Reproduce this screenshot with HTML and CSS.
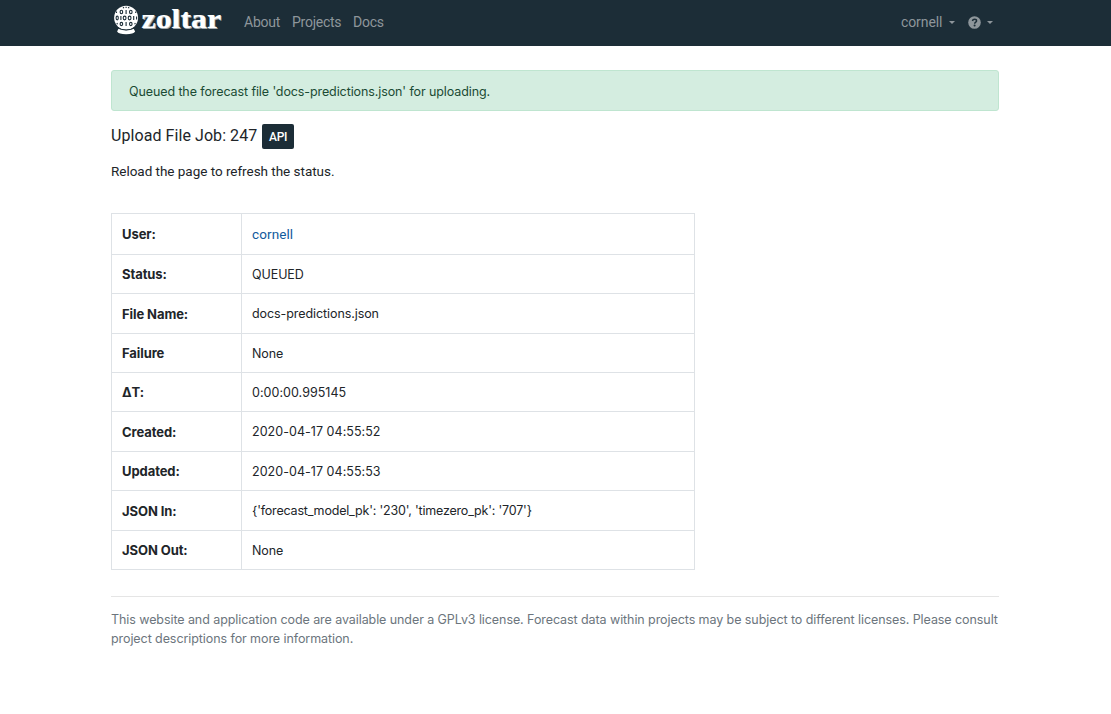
FILE: index.html
```html
<!DOCTYPE html>
<html lang="en">
<head>
<meta charset="utf-8">
<title>Upload File Job: 247</title>
<link rel="stylesheet" href="styles.css">
</head>
<body>
<nav class="navbar">
  <div class="container nav-inner">
    <a class="brand">
      <svg width="112" height="36" viewBox="0 0 112 36" role="img" aria-label="zoltar">
        <g transform="translate(.6 0)">
        <circle cx="14.5" cy="17.8" r="12" fill="#fff"/>
        <path d="M7 28.5Q14.5 32 22 28.5L23.5 31.5Q22 34.2 14.5 34.2Q7 34.2 5.5 31.5Z" fill="#fff"/>
        <g fill="none" stroke="#1c2d37" stroke-width="1.1">
          <ellipse cx="9.8" cy="12" rx="1.3" ry="1.7"/><path d="M14.5 10V14"/><ellipse cx="19.2" cy="12" rx="1.3" ry="1.7"/>
          <path d="M4.9 11.5V13M24.1 11.5V13"/>
          <ellipse cx="5.6" cy="18" rx="1.1" ry="1.9"/><path d="M9.3 15.9V20.1"/><ellipse cx="13" cy="18" rx="1.4" ry="1.9"/><ellipse cx="18" cy="18" rx="1.4" ry="1.9"/><path d="M22.1 15.9V20.1M25 16.5V19.5"/>
          <ellipse cx="9.8" cy="24" rx="1.3" ry="1.6"/><path d="M14.5 22V26"/><ellipse cx="19.2" cy="24" rx="1.3" ry="1.6"/>
          <path d="M11.5 8.2L12.3 7M14.5 8V6.8M17.5 8.2L16.7 7M5.2 23L6 24.2M23.8 23L23 24.2"/>
          <path d="M5 27.5Q14.5 32.5 24 27.5" stroke-width="1"/>
        </g>
        </g>
        <text class="wordmark-shade" x="31.4" y="29.1" textLength="79.5" lengthAdjust="spacingAndGlyphs">zoltar</text>
        <text class="wordmark" x="30.6" y="28.3" textLength="79.5" lengthAdjust="spacingAndGlyphs">zoltar</text>
      </svg>
    </a>
    <a class="link about">About</a>
    <a class="link projects">Projects</a>
    <a class="link docs">Docs</a>
    <a class="link user">cornell</a><span class="caret"></span>
    <svg class="help" width="13" height="13" viewBox="0 0 512 512" aria-label="Help"><circle cx="256" cy="256" r="248" fill="currentColor"/><path d="M174 197C184 145 217 126 263 126C304 126 337 151 337 193C337 249 263 239 263 304" fill="none" stroke="#1c2d37" stroke-width="58"/><circle cx="260" cy="370" r="40" fill="#1c2d37"/></svg><span class="caret caret-help"></span>
  </div>
</nav>
<main class="container">
  <div class="alert"><span>Queued the forecast file 'docs-predictions.json' for uploading.</span></div>
  <div class="heading"><h1>Upload File Job: 247</h1><a class="api">API</a></div>
  <p class="reload">Reload the page to refresh the status.</p>
  <dl class="details">
    <dt>User:</dt><dd><a class="user-link">cornell</a></dd>
    <dt>Status:</dt><dd>QUEUED</dd>
    <dt>File Name:</dt><dd>docs-predictions.json</dd>
    <dt>Failure</dt><dd>None</dd>
    <dt>ΔT:</dt><dd class="numeric">0:00:00.995145</dd>
    <dt>Created:</dt><dd class="numeric">2020-04-17 04:55:52</dd>
    <dt>Updated:</dt><dd class="numeric">2020-04-17 04:55:53</dd>
    <dt>JSON In:</dt><dd class="json">{'forecast_model_pk': '230', 'timezero_pk': '707'}</dd>
    <dt>JSON Out:</dt><dd>None</dd>
  </dl>
  <footer>This website and application code are available under a GPLv3 license. Forecast data within projects may be subject to different licenses. Please consult<br>project descriptions for more information.</footer>
</main>
</body>
</html>
```
FILE: styles.css
```css
* { box-sizing: border-box; }
body { margin: 0; background: #fff; color: #212529; font: 12.5px/20px Inter, "Liberation Sans", sans-serif; }
.container { width: 888px; margin-left: 111px; }
.navbar { height: 46px; background: #1c2d37; }
.nav-inner { display: flex; align-items: center; height: 45px; color: #8e969b; }
.brand { width: 133px; height: 45px; flex: none; }
.brand svg { display: block; }
.wordmark, .wordmark-shade { font: bold 27px "Liberation Serif", serif; fill: #fff; stroke: #fff; stroke-width: .2; }
.wordmark-shade { fill: #a4abaf; stroke: #a4abaf; }
.link { padding-bottom: 1px; font: 14px/20px Roboto, sans-serif; letter-spacing: -.25px; white-space: nowrap; flex: none; }
.about { width: 48px; }
.projects { width: 61px; }
.user { width: 48px; margin-left: auto; letter-spacing: -.1px; }
.caret { width: 0; height: 0; flex: none; border: 3px solid transparent; border-top-color: currentColor; border-bottom: 0; }
.caret-help { margin: 0 6px 0 6px; }
.help { margin-left: 13px; flex: none; }
.alert { height: 41px; margin-top: 24px; padding: 2px 17px 0; display: flex; align-items: center; border: 1px solid #bfe5d0; border-radius: 3px; background: #d4ede0; color: #1b4b34; white-space: nowrap; letter-spacing: -.1px; }
.heading { display: flex; align-items: center; gap: 4px; height: 25px; margin-top: 13px; }
h1 { width: 147px; margin: 0; padding-bottom: 2px; font: 400 16px/20px Roboto, sans-serif; letter-spacing: .07px; white-space: nowrap; }
.api { width: 32px; height: 25px; border-radius: 2px; background: #1c2d37; color: #fff; font: 500 12px/26px Roboto, sans-serif; letter-spacing: -.4px; text-align: center; }
.reload { margin: 12px 0 0; height: 20px; font: 13.5px/20px Roboto, sans-serif; letter-spacing: -.03px; }
.details { width: 584px; margin: 32px 0 0; display: grid; grid-template-columns: 130px 453px; grid-template-rows: 41px 39px 40px 39px 39px 40px 39px 40px 39px; border: solid #dee2e6; border-width: 1px 0 0 1px; }
dt, dd { margin: 0; padding: 0 10px; border: solid #dee2e6; border-width: 0 1px 1px 0; display: flex; align-items: center; white-space: nowrap; }
dt { font-size: 13px; font-weight: 700; letter-spacing: -.08px; }
dd { padding-top: 1px; letter-spacing: -.08px; }
.numeric { letter-spacing: .04px; }
.json { padding-top: 0; letter-spacing: -.19px; }
.user-link { padding-bottom: 1px; font: 13.5px/20px Roboto, sans-serif; letter-spacing: .1px; color: #125a9c; }
footer { margin-top: 26px; padding-top: 13px; border-top: 1px solid #e5e5e5; color: #6c757d; line-height: 19px; letter-spacing: -.078px; white-space: nowrap; }
```
